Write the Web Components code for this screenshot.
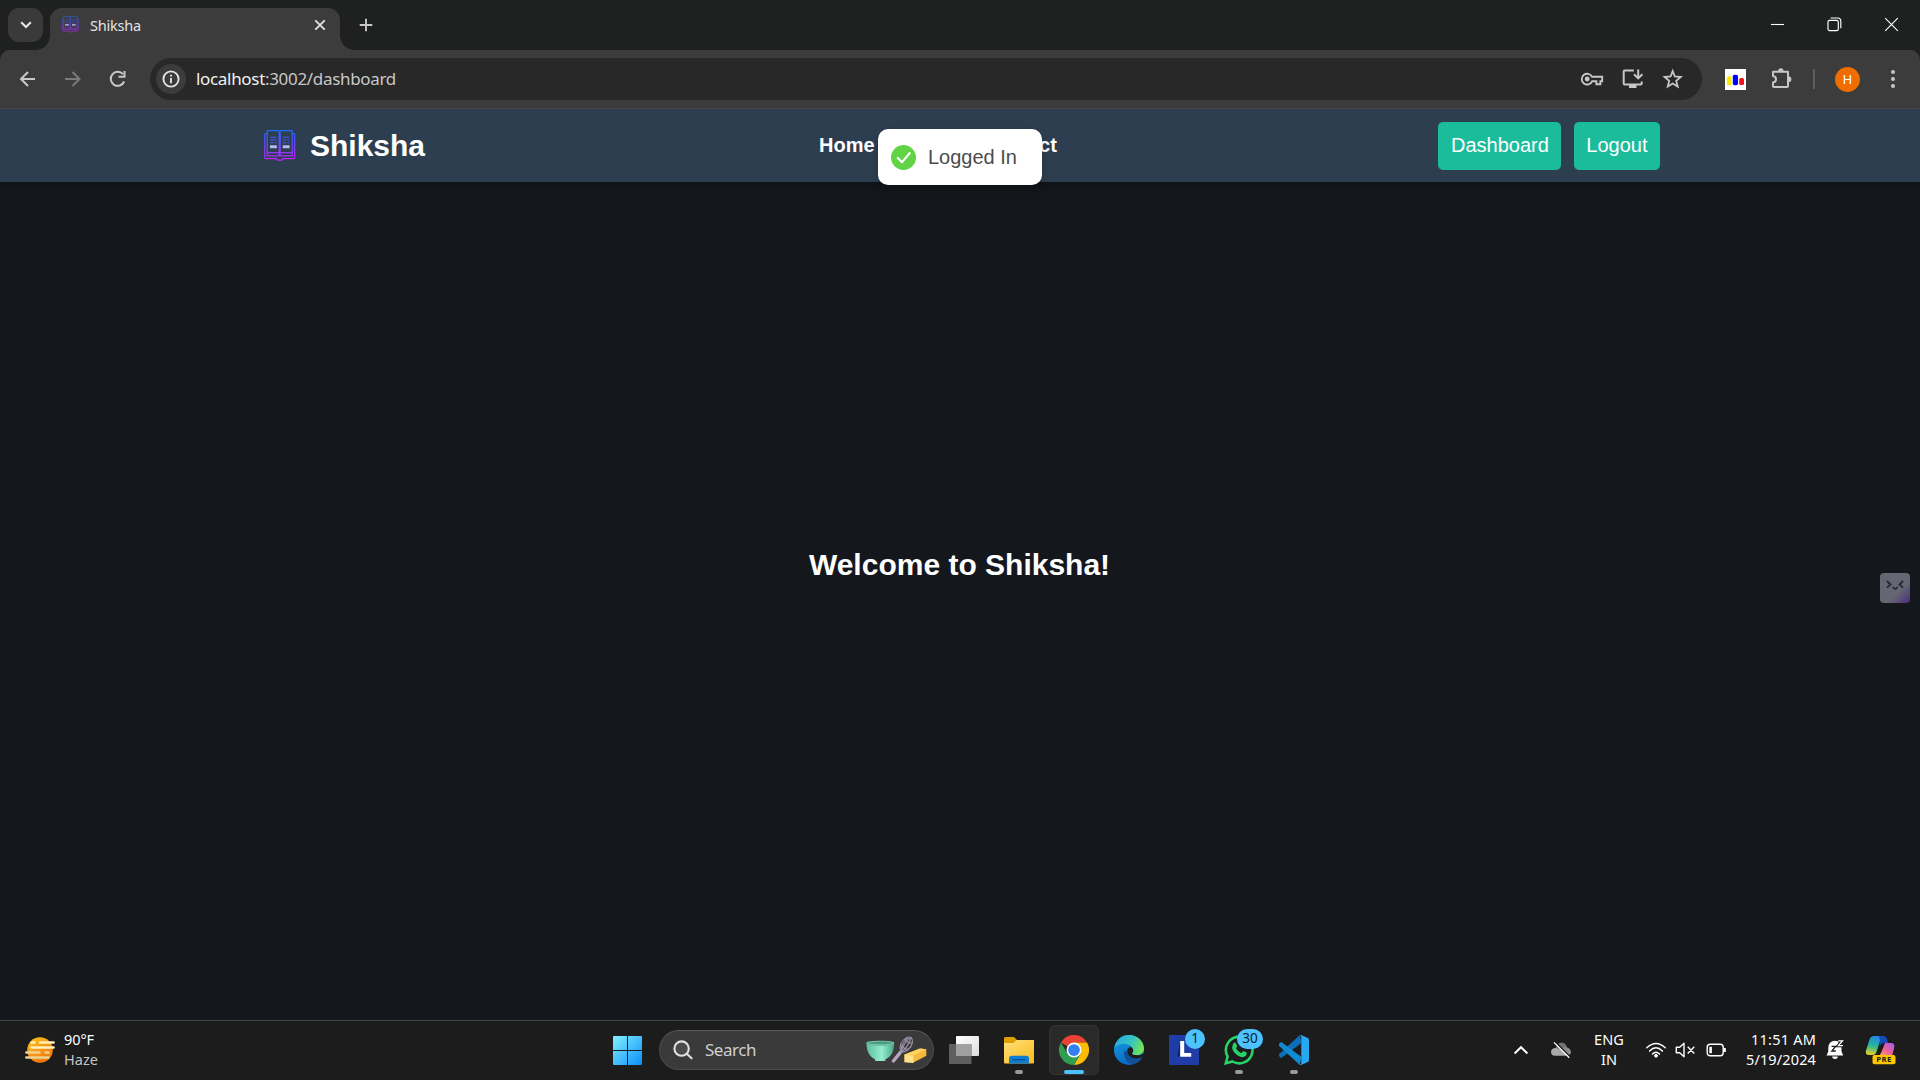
<!DOCTYPE html>
<html lang="en">
<head>
<meta charset="utf-8">
<title>Shiksha</title>
<style>
html,body{margin:0;height:100%;overflow:hidden;background:#14181d}
body{font-family:"Noto Sans","Open Sans",sans-serif;color:#fff}
</style>
</head>
<body>
<desk-top></desk-top>
<script>
const define = (name, html) => {
  const t = document.createElement('template');
  t.innerHTML = html;
  customElements.define(name, class extends HTMLElement {
    connectedCallback() {
      if (this.shadowRoot) return;
      this.attachShadow({mode: 'open'}).appendChild(t.content.cloneNode(true));
    }
  });
};

/* Single line of text tracked to an exact width in pixels. */
customElements.define('ui-text', class extends HTMLElement {
  connectedCallback() {
    if (this.shadowRoot) return;
    const r = this.attachShadow({mode: 'open'});
    r.innerHTML = '<style>:host{display:inline-block;white-space:nowrap}span{display:inline-block}</style><span><slot></slot></span>';
    const want = +this.getAttribute('w'), el = r.querySelector('span');
    const n = this.textContent.length;
    if (want) el.style.letterSpacing = ((want - el.getBoundingClientRect().width) / n) + 'px';
  }
});

define('book-logo', `
<style>:host{display:block;width:32px;height:32px}svg{display:block;width:100%;height:100%}</style>
<svg viewBox="0 0 32 32" fill="none"><defs><linearGradient id="g" x1="0" y1="0" x2="0" y2="31" gradientUnits="userSpaceOnUse"><stop offset="0" stop-color="#1a6dff"/><stop offset="1" stop-color="#c822ff"/></linearGradient></defs>
<g stroke="url(#g)" stroke-width="1.2"><path d="M3.2 23.6V1.3Q3.2.7 3.8.7H14.6L15.7 1.8 16.8.7H27.6Q28.2.7 28.2 1.3V25.9H3.2V22.7H28.2"/><path d="M15.2 2V25.5M16.2 2V25.5"/><path d="M3 3.7H1.9Q.8 3.7.8 4.8V27.2Q.8 28.6 2 28.6H12.6L13.6 30.2H18L18.9 28.6H29.4Q30.6 28.6 30.6 27.2V4.8Q30.6 3.7 29.5 3.7H28.4"/></g>
<g stroke="#465cff" stroke-width="1.1"><path d="M6.2 7.2H12.6M6.2 10H12.6M6.2 12.8H9.4M10.8 12.8H12.6M18.8 7.2H25.2M18.8 10H21.6M23 10H25.2M18.8 12.8H22M23.4 12.8H25.2"/></g>
<path fill="#b5b9f8" d="M6 15.2h6.8v3H6zM18.8 15.2h6.8v3h-6.8z"/></svg>`);

define('browser-tabs', `
<style>
:host{display:flex;height:50px;background:#1f2020;box-sizing:border-box;padding-left:8px;align-items:flex-start}
.list{width:35px;height:34px;margin-top:8px;border-radius:11px;background:#3a3a3a;display:grid;place-items:center;margin-right:7px}
.tab{position:relative;width:290px;height:42px;margin-top:8px;background:#3c3c3c;border-radius:12px 12px 0 0;display:flex;align-items:center;box-sizing:border-box;padding:0 13px 9px 12px;color:#e3e3e3;font-size:14.5px;line-height:20px}
.tab:before,.tab:after{content:"";position:absolute;bottom:0;width:14px;height:14px}
.tab:before{left:-14px;background:radial-gradient(circle at 0 0,transparent 13.5px,#3c3c3c 14px)}
.tab:after{right:-14px;background:radial-gradient(circle at 100% 0,transparent 13.5px,#3c3c3c 14px)}
book-logo{width:17px;height:17px;opacity:.8;margin:0 11px 0 0}
.x{margin-left:auto;display:block}
.add{margin:15px 0 0 15.5px}
.win{margin-left:auto;display:flex;height:49px;padding-right:21px;gap:42px;align-items:center}
svg{display:block}
</style>
<div class="list"><svg width="12" height="8" viewBox="0 0 12 8" fill="none" stroke="#e6e6e6" stroke-width="2.1"><path d="M1.2 1.2 6 6 10.8 1.2"/></svg></div>
<div class="tab"><book-logo></book-logo><ui-text w="51">Shiksha</ui-text>
<svg class="x" width="14" height="14" viewBox="0 0 14 14" stroke="#e3e3e3" stroke-width="1.8"><path d="M2.3 2.3 11.7 11.7M11.7 2.3 2.3 11.7"/></svg></div>
<svg class="add" width="20" height="20" viewBox="0 0 20 20" stroke="#c7c7c7" stroke-width="1.9"><path d="M3.7 10H16.3M10 3.7V16.3"/></svg>
<div class="win">
<svg width="15" height="15" viewBox="0 0 15 15" stroke="#fff" stroke-width="1.1"><path d="M1 7.5H14"/></svg>
<svg width="15" height="15" viewBox="0 0 15 15" fill="none" stroke="#fff" stroke-width="1.15"><rect x="1" y="3.3" width="10.3" height="10.3" rx="1.6"/><path d="M3.6 1H10.6Q13.8 1 13.8 4.2V11.2"/></svg>
<svg width="15" height="15" viewBox="0 0 15 15" stroke="#fff" stroke-width="1.15"><path d="M1.2 1.2 13.8 13.8M13.8 1.2 1.2 13.8"/></svg>
</div>`);

define('browser-toolbar', `
<style>
:host{display:block;height:59px;background:#1f2020}
.bar{height:59px;box-sizing:border-box;background:#3c3c3c;border-radius:10px 10px 0 0;border-bottom:1px solid #494946;display:flex;align-items:center;padding:0 18px}
svg{display:block;flex:none}
.nav{display:flex;gap:25px;width:132px}
.omni{width:1552px;height:42px;border-radius:21px;background:#282828;display:flex;align-items:center;box-sizing:border-box;padding:0 17px 0 6px}
.info{width:30px;height:30px;border-radius:50%;background:#3c3c3c;display:grid;place-items:center;margin-right:10px}
.url{font-size:17px;line-height:24px;color:#c7c7c7}.url b{font-weight:400;color:#f0f0f0}
.in{margin-left:auto;display:flex;gap:16.5px;align-items:center}
.ext{width:21px;height:21px;margin-left:23px}
.puz{margin-left:24px}
.sep{width:2px;height:20px;background:#5e5e5e;margin:0 20px 0 19px}
.av{width:25px;height:25px;border-radius:50%;background:#ef6c00;display:grid;place-items:center;color:#fff;font:13px/25px Roboto,sans-serif}
.dots{margin-left:auto;margin-right:6.5px}
</style>
<div class="bar">
<div class="nav">
<svg width="20" height="20" viewBox="0 0 20 20" fill="none" stroke="#c9c9c9" stroke-width="2"><path d="M17 10H3.5M10 3 3 10 10 17"/></svg>
<svg width="20" height="20" viewBox="0 0 20 20" fill="none" stroke="#7b7b7b" stroke-width="2"><path d="M2 10H15.5M9.5 3 16.5 10 9.5 17"/></svg>
<svg width="20" height="20" viewBox="0 0 20 20" fill="none" stroke="#c9c9c9" stroke-width="2"><path d="M15 5.2A7 7 0 1 0 16.2 12.5"/><path d="M16.5 2V7.7H10.5"/></svg>
</div>
<div class="omni"><div class="info"><svg width="18" height="18" viewBox="0 0 18 18" fill="none" stroke="#e3e3e3" stroke-width="1.9"><circle cx="9" cy="9" r="7.6"/><path d="M9 8V13.2M9 4.7V6.6"/></svg></div>
<ui-text class="url" w="200"><b>localhost</b>:3002/dashboard</ui-text>
<div class="in">
<svg width="24" height="20" viewBox="0 0 24 20" fill="none" stroke="#c7c7c7" stroke-width="1.9"><path d="M12 7.7H22.2V12.2H20.4V15.3H16.4V12.3H12.1A5.4 5.4 0 1 1 12 7.7Z"/><circle cx="7.2" cy="10" r="1.5" fill="#c7c7c7"/></svg>
<svg width="24" height="24" viewBox="0 0 24 24" fill="none" stroke="#c7c7c7" stroke-width="2"><path d="M12.8 3.5H3.7Q2.7 3.5 2.7 4.5V16.5Q2.7 17.5 3.7 17.5H19.7Q20.7 17.5 20.7 16.5V14.5"/><path d="M8 19.5H15.5" stroke-width="3"/><path d="M17.2 2.5V11M13 7.2 17.2 11.4 21.4 7.2"/></svg>
<svg width="24" height="24" viewBox="0 0 24 24" fill="none" stroke="#c7c7c7" stroke-width="1.8" stroke-linejoin="miter"><path d="M11.7 4.1 13.8 9.5 19.8 10 15.2 13.9 16.7 19.6 11.7 16.6 6.7 19.6 8.2 13.9 3.6 10 9.6 9.5Z"/></svg>
</div></div>
<svg class="ext" viewBox="0 0 21 21"><path fill="#fff" d="M0 0h21v21H0z"/><rect x="1.8" y="7.2" width="4.6" height="9" rx="1.5" fill="#ffe800"/><rect x="7.8" y="5.7" width="5.2" height="10.5" rx="1.6" fill="#00f"/><rect x="14.2" y="9" width="4.8" height="7" rx="1.5" fill="#f01020"/></svg>
<svg class="puz" width="24" height="24" viewBox="0 0 24 24"><path fill="none" stroke="#c7c7c7" stroke-width="2" stroke-linejoin="round" d="M3 4.7H18V18.9Q18 19.9 17 19.9H4Q3 19.9 3 18.9V15.4Q6 15.1 6 12.3T3 9.1Z"/><path fill="#c7c7c7" d="M8 4.2A2.8 3 0 0 1 13.6 4.2ZM18.4 9.3A3 3 0 0 1 18.4 15.3Z"/></svg>
<i class="sep"></i><div class="av">H</div>
<svg class="dots" width="6" height="20" viewBox="0 0 6 20" fill="#c7c7c7"><circle cx="3" cy="3" r="2"/><circle cx="3" cy="10" r="2"/><circle cx="3" cy="17" r="2"/></svg>
</div>`);

define('nav-button', `
<style>:host{display:block;background:#1abc9c;border-radius:5px;padding:12.5px 12.5px;font-size:20px;line-height:23px;color:#fff}</style><slot></slot>`);

define('site-nav', `
<style>
:host{display:grid;grid-template-columns:559px 1fr auto;align-items:center;height:73px;padding:0 260px;box-sizing:border-box;background:#2c3e50;box-shadow:0 3px 7px rgba(0,0,0,.25);font-family:"Liberation Sans",Arial,sans-serif;position:relative}
.brand{display:flex;align-items:center;font-size:30px;font-weight:700;line-height:34px}
book-logo{margin:0 14.5px 0 3.5px}
nav{display:flex;gap:25px;font-weight:700;font-size:20px;line-height:23px}
.act{display:flex;gap:12.5px}
</style>
<div class="brand"><book-logo></book-logo>Shiksha</div>
<nav><span>Home</span><span>About</span><span>Contact</span></nav>
<div class="act"><nav-button>Dashboard</nav-button><nav-button>Logout</nav-button></div>`);

define('toast-message', `
<style>:host{position:absolute;z-index:5;left:878px;top:129px;width:164px;height:56px;box-sizing:border-box;background:#fff;border-radius:10px;box-shadow:0 4px 12px rgba(0,0,0,.14),0 3px 4px rgba(0,0,0,.06);display:flex;align-items:center;padding:0 12.5px;gap:12.5px;font:20px/26px "Liberation Sans",Arial,sans-serif;color:#4c4c4c}
svg{flex:none}</style>
<svg width="25" height="25" viewBox="0 0 25 25"><circle cx="12.5" cy="12.5" r="12.5" fill="#61d345"/><path d="M6.8 13 11 17.2 18.6 8.2" fill="none" stroke="#fff" stroke-width="2.2" stroke-linecap="round"/></svg><span><slot></slot></span>`);

define('helper-bubble', `
<style>:host{position:absolute;left:1880px;top:573px;width:30px;height:30px;border-radius:4px;background:linear-gradient(135deg,#646771 0,#646771 62%,#543f78 88%,#4c2b78)}svg{display:block}</style>
<svg width="30" height="30" viewBox="0 0 30 30" fill="none" stroke="#24272f" stroke-width="1.8" stroke-linecap="round"><path d="M7.5 8.5 10.5 11.5 7.5 14.2M22.5 8.5 19.5 11.5 22.5 14.2M13.2 14.5Q15.2 17 17.2 14.5"/></svg>`);

define('welcome-view', `
<style>:host{display:flex;flex:1;align-items:center;justify-content:center;background:#14181d;font-family:"Liberation Sans",Arial,sans-serif}h1{margin:0;padding:0 1px 72px 0;font-size:30px;line-height:34px}</style>
<h1>Welcome to Shiksha!</h1>`);

/* Taskbar button: slotted icon, optional running mark and active tile. */
define('task-app', `
<style>
:host{position:relative;display:grid;place-items:center;width:50px;height:50px;box-sizing:border-box;border-radius:6px}
:host([active]){background:#2a2a2a;border:1px solid #333}
i{position:absolute;bottom:1px;left:21px;width:8px;height:4px;border-radius:2px;background:#9a9a9a;display:none}
:host([open]) i{display:block}:host([active]) i{display:block;width:20px;left:14px;bottom:0;background:#4cc2ff}
</style><slot></slot><i></i>`);

define('task-search', `
<style>:host{display:flex;align-items:center;width:275px;height:40px;box-sizing:border-box;border:1px solid #4b4b4b;border-top-color:#5a5a5a;border-radius:20px;background:#3a3a3a;padding:0 5px 0 13px;color:#cfcfcf;font-size:17px;line-height:24px}
.m{margin-right:12px}.art{margin-left:auto}</style>
<svg class="m" width="20" height="20" viewBox="0 0 20 20" fill="none" stroke="#e0e0e0" stroke-width="2.1" stroke-linecap="round"><circle cx="8.6" cy="8.6" r="7.2" fill="#4b4b4b"/><path d="M13.8 13.8 18.6 18.3"/></svg>
<ui-text w="51">Search</ui-text>
<svg class="art" width="62" height="30" viewBox="0 0 62 30"><defs><linearGradient id="a"><stop stop-color="#5dbd9c"/><stop offset=".55" stop-color="#96edcf"/><stop offset="1" stop-color="#4da98d"/></linearGradient></defs>
<path d="M.5 8.2C.5 17 4 22 9 24.2V26H19.5V24.2C25 22 28 17 28 8.2Z" fill="url(#a)"/><ellipse cx="14.3" cy="8.4" rx="13.8" ry="2.2" fill="#4b9a80"/><ellipse cx="14.3" cy="8" rx="13.8" ry="1.8" fill="none" stroke="#7fd5b7" stroke-width=".9"/>
<path d="M34.3 17.5 27.4 26" stroke="#b6a4bd" stroke-width="3.4" stroke-linecap="round"/><path d="M35 17.5Q31.5 8 40.5 2.6 47 .2 46.5 7.5 44.5 15.5 35 17.5ZM35 17.5Q35 8 42 2.6M35 17.5Q42 12 45 3M35 17.5Q37.5 8 44.3 2.4M34.8 10.5Q40 15.5 43 13.8M38 4.5Q42 8 46.3 8" fill="none" stroke="#9b90a3" stroke-width="1.1"/>
<path d="M38.5 19.5 54 13.5 60.3 14.3V20.8L47.5 27.5 38.5 27Z" fill="#f6b93a"/><path d="M38.5 19.5 54 13.5 60.3 14.3 47.5 20.5Z" fill="#ffd25d"/><path d="M38.5 19.5 47.5 20.5V28L38.5 27.2Z" fill="#ffe08a"/></svg>`);

define('count-badge', `
<style>:host{position:absolute;top:4px;height:20px;min-width:20px;box-sizing:border-box;border-radius:10px;background:#4cc2ff;color:#08202e;font-size:13.5px;line-height:19px;text-align:center}</style><slot></slot>`);

define('win-taskbar', `
<style>
:host{display:grid;grid-template-columns:606px 715px 1fr;align-items:center;height:60px;box-sizing:border-box;border-top:1px solid #404346;padding-bottom:1px;background:#1c1c1c;color:#fff}
svg{display:block;flex:none}
.w{display:flex;align-items:center;padding:0 0 1px 24px;gap:9px;font-size:14.5px;line-height:20px}
.w div{display:flex;flex-direction:column;align-items:flex-start;padding-bottom:2px}.w .h{color:#c5c5c5}
.mid{display:flex;align-items:center;height:50px}
.start{padding:1px 17px 0 7px}.apps{display:flex;gap:5px;margin-left:5px}
.tray{display:flex;align-items:center;font-size:14.5px;line-height:20px;padding-left:192px;padding-bottom:1px}
.lang{display:flex;flex-direction:column;align-items:center;width:40px;margin:0 16px 0 18px;padding-bottom:1px}
.time{display:flex;flex-direction:column;align-items:flex-end;width:72px;margin-left:17px;padding-bottom:2px}
</style>
<div class="w"><svg width="31" height="28" viewBox="0 0 31 28"><defs><linearGradient id="s" x1="0" y1="0" x2=".6" y2="1"><stop stop-color="#ffc51b"/><stop offset="1" stop-color="#f47510"/></linearGradient></defs><circle cx="16" cy="14" r="12.8" fill="url(#s)"/><g stroke-width="2.5" stroke-linecap="round"><path stroke="#fff0bd" d="M7.5 6.5H10.5M16 6.5H29.6M7.5 11.5H29.6"/><path stroke="#ead38e" d="M2.3 16.5H15.5M21.5 16.5H24.5M2.3 21.5H24.5"/></g></svg>
<div><ui-text w="30">90°F</ui-text><ui-text class="h" w="34">Haze</ui-text></div></div>
<div class="mid"><div class="start"><svg width="29" height="29" viewBox="0 0 29 29"><defs><linearGradient id="wn" x2="1" y2="1"><stop stop-color="#83f0ff"/><stop offset="1" stop-color="#098ff8"/></linearGradient></defs><path fill="url(#wn)" d="M1 0H14V14H0V1Q0 0 1 0ZM15 0H28Q29 0 29 1V14H15ZM0 15H14V29H1Q0 29 0 28ZM15 15H29V28Q29 29 28 29H15Z"/></svg></div>
<task-search></task-search>
<div class="apps">
<task-app><svg width="30" height="30" viewBox="0 0 30 30"><defs><linearGradient id="tv" x2="1" y2="1"><stop stop-color="#fff"/><stop offset="1" stop-color="#ddd"/></linearGradient></defs><rect x="7" y="1" width="23" height="20" rx="1" fill="url(#tv)"/><rect x="0" y="9" width="22.5" height="20" rx="1" fill="#5f5f5f"/><rect x="7" y="9" width="15.5" height="12" fill="#a0a0a0"/></svg></task-app>
<task-app open><svg width="30" height="30" viewBox="0 0 30 30"><defs><linearGradient id="fo" x2=".8" y2="1"><stop stop-color="#ffe07a"/><stop offset="1" stop-color="#fcbc24"/></linearGradient></defs><path fill="#dda000" d="M0 3.2Q0 2 1.2 2H10L13.5 5.5V10H0Z"/><path fill="url(#fo)" d="M0 8H9.5L12.5 5H30V27.5Q30 28.5 29 28.5H1Q0 28.5 0 27.5Z"/><path fill="#0f7ed1" d="M5 28.5V23.5Q5 20.8 7.7 20.8H22.3Q25 20.8 25 23.5V28.5Z"/><path stroke="#0b4f91" stroke-width="1.3" d="M8.5 24.7H21.5"/></svg></task-app>
<task-app active><svg width="30" height="30" viewBox="0 0 48 48"><path fill="#ea4335" d="M24 24 3.2 12A24 24 0 0 1 44.8 12H24Z"/><path fill="#fbbc05" d="M24 12H44.8A24 24 0 0 1 24 48L34.4 30Z"/><path fill="#2f9e4f" d="M13.6 30 3.2 12A24 24 0 0 0 24 48L34.4 30Z"/><circle cx="24" cy="24" r="12" fill="#fff"/><circle cx="24" cy="24" r="9.4" fill="#347ff0"/></svg></task-app>
<task-app><svg width="30" height="30" viewBox="0 0 30 30"><defs><linearGradient id="e1" x1="0" y1=".2" x2="1" y2=".5"><stop stop-color="#2aa9e0"/><stop offset=".55" stop-color="#33c4c2"/><stop offset="1" stop-color="#72e457"/></linearGradient><linearGradient id="e2" x1="0" y1="0" x2=".5" y2="1"><stop stop-color="#16a1dd"/><stop offset="1" stop-color="#0867c8"/></linearGradient></defs><circle cx="15" cy="15" r="15" fill="url(#e2)"/><path fill="#114f96" d="M10.4 15.5C8.8 22 13 29 19.5 29.2 24 28 27 25 28 22.5 23 25.5 14 22.5 13.2 17Z"/><path fill="#1c1c1c" d="M13.2 16C13.5 22.5 22 25.5 28 22.3L30 18.5 26 20C22 20.7 18 19.4 18.2 18.1 20.6 16 19.6 12 16 12Q13.2 13 13.2 16Z"/><path fill="#1c1c1c" d="M28 22.3 31 17V28Z"/><path fill="url(#e1)" d="M.3 13C2 4 8 0 15 0 24 0 30 6.5 30 13.5 30 18.2 26 20.4 22 20.1 18.5 20 17.5 18.8 18.6 17.8 20.5 15.5 18.5 10 12.5 9.2 6.5 8.5 2 10.8.3 13Z"/></svg></task-app>
<task-app><svg width="30" height="30" viewBox="0 0 30 30"><path fill="#203ca7" d="M0 0H30V30H0Z"/><path fill="#102a63" d="M11.2 7 8 21.5H20L22 20H11Z"/><path fill="#fff" d="M11.2 6H15.2V18H22.2V21.7H11.2Z"/></svg><count-badge style="left:26px">1</count-badge></task-app>
<task-app open><svg width="30" height="30" viewBox="0 0 30 30"><path fill="none" stroke="#25d366" stroke-width="2.6" d="M1.8 28.3 3.6 21.5A13.3 13.3 0 1 1 8.5 26.5Z"/><path fill="#25d366" d="M9.5 8.2Q10.2 7.2 11.5 7.5L13.1 11Q13.3 11.8 12 13.2 14 17 17.3 18.2L19 16.3Q19.5 15.8 22.7 17.6 23 21.5 18.8 22.3 14 22 10 17 6.7 12.5 9.5 8.2Z"/></svg><count-badge style="left:23px;width:26px">30</count-badge></task-app>
<task-app open><svg width="30" height="30" viewBox="0 0 30 30"><path fill="#0b6fb8" d="M0 19.3 20.8 0 22.5 8 3 22.6Q2.2 23.2 1.5 22.5L.2 21.3Q-.5 20.2 0 19.3Z"/><path fill="#108bd3" d="M0 10.7 20.8 30 22.5 22 3 7.4Q2.2 6.8 1.5 7.5L.2 8.7Q-.5 9.8 0 10.7Z"/><path fill="#27a9f2" d="M21.2.2Q22 0 22.7.3L28.8 3Q30 3.7 30 5V25Q30 26.3 28.8 27L22.7 29.7Q21.3 30.2 20.5 29.4 22.3 29.8 22.3 28V2Q22.2.2 20.5.6Z"/></svg></task-app>
</div></div>
<div class="tray">
<svg width="16" height="12" viewBox="0 0 16 12" fill="none" stroke="#fff" stroke-width="1.9"><path d="M1.6 9.5 8 3.2 14.4 9.5"/></svg>
<svg style="margin-left:22px" width="20" height="18" viewBox="0 0 20 18"><path fill="#727272" d="M4.5 7.5Q6 1.5 10.5 1.5 15 1.7 16 6.5L14 10 4 9Z"/><path fill="#a9a9a9" d="M0 11Q.3 7 4.7 7 6.5 7.2 10 9.2L17 14.7H4Q0 14.5 0 11Z"/><path fill="#8d8d8d" d="M10 8Q13 5.3 16.2 6.6 20 8 20 11.3 19.8 14 17 14.7Z"/><path stroke="#1c1c1c" stroke-width="1.6" d="M4.2.8 19.3 16"/><path stroke="#fff" stroke-width="1.3" d="M3 1.4 18.3 16.8"/></svg>
<div class="lang"><ui-text w="30">ENG</ui-text><ui-text w="16">IN</ui-text></div>
<svg width="22" height="20" viewBox="0 0 22 20" fill="none" stroke="#fff" stroke-width="1.5" stroke-linecap="round"><path d="M1.8 7.8Q11-.8 20.2 7.8M4.6 11Q11 4.6 17.4 11M7.5 14Q11 10.4 14.5 14"/><circle cx="11" cy="15.8" r="1.4" fill="#fff" stroke-width="1"/></svg>
<svg style="margin-left:8px" width="21" height="18" viewBox="0 0 21 18" fill="none" stroke="#fff" stroke-width="1.4" stroke-linejoin="round"><path d="M1.3 6.2H4.7L9 2.3V15.7L4.7 11.8H1.3ZM12.7 5.8 19.3 12.4M19.3 5.8 12.7 12.4" /></svg>
<svg style="margin-left:10px" width="21" height="16" viewBox="0 0 21 16" fill="none" stroke="#fff" stroke-width="1.4"><rect x="1.2" y="2.2" width="16" height="11.6" rx="3"/><path d="M4.6 4.8V11.2" stroke-width="2.6"/><path d="M18.6 6V10" stroke-width="2.4"/></svg>
<div class="time"><ui-text w="65">11:51 AM</ui-text><ui-text w="70">5/19/2024</ui-text></div>
<svg style="margin-left:9px" width="20" height="21" viewBox="0 0 20 21"><path fill="#fff" d="M3.3 9Q3.5 2 10 1.8 16.3 2 16.5 9V12.5L18.2 16.5H1.5L3.3 12.5ZM7 17.5H13Q12.5 20 10 20T7 17.5Z"/><path fill="none" stroke="#1c1c1c" stroke-width="1.3" d="M6.6 7.4H10.6L6.8 12H10.8"/><path fill="none" stroke="#1c1c1c" stroke-width="3.4" d="M13.2 1.8H17.5L13.4 6.6H18"/><path fill="none" stroke="#fff" stroke-width="1.3" d="M13.2 1.8H17.5L13.4 6.6H18"/></svg>
<svg style="margin-left:20px" width="31" height="30" viewBox="0 0 31 30"><defs><linearGradient id="c1" x1=".5" x2=".3" y2="1"><stop stop-color="#2188e8"/><stop offset=".5" stop-color="#24b59b"/><stop offset="1" stop-color="#e8cf24"/></linearGradient><linearGradient id="c2" x1="1" x2="0" y2="1"><stop stop-color="#a35bf2"/><stop offset=".5" stop-color="#e9609b"/><stop offset="1" stop-color="#ffab5a"/></linearGradient></defs><path fill="url(#c1)" d="M9 1H19Q16 2 15 6L11.5 17Q10.5 20 7.5 20H4Q0 20 1 15.5L4.5 4.5Q5.5 1 9 1Z"/><path fill="#1749b7" d="M14 1H18.5Q21 1 22 4L23 8H19Q16 8 15 11Q15.5 6 14 1Z"/><path fill="url(#c2)" d="M20 8H26Q30.5 8 29 13.5L27 21H13Q15.5 20 16.5 17Z"/><rect x="7.5" y="20" width="23" height="9.2" rx="2" fill="#ffc700"/><text x="19" y="27.4" text-anchor="middle" font-family="Open Sans,sans-serif" font-size="7.8" font-weight="700" letter-spacing=".4" fill="#181818">PRE</text></svg>
</div>`);

define('desk-top', `
<style>:host{display:flex;flex-direction:column;width:1920px;height:1080px;position:relative}</style>
<browser-tabs></browser-tabs><browser-toolbar></browser-toolbar><site-nav></site-nav><welcome-view></welcome-view><win-taskbar></win-taskbar>
<toast-message>Logged In</toast-message><helper-bubble></helper-bubble>`);
</script>
</body>
</html>
